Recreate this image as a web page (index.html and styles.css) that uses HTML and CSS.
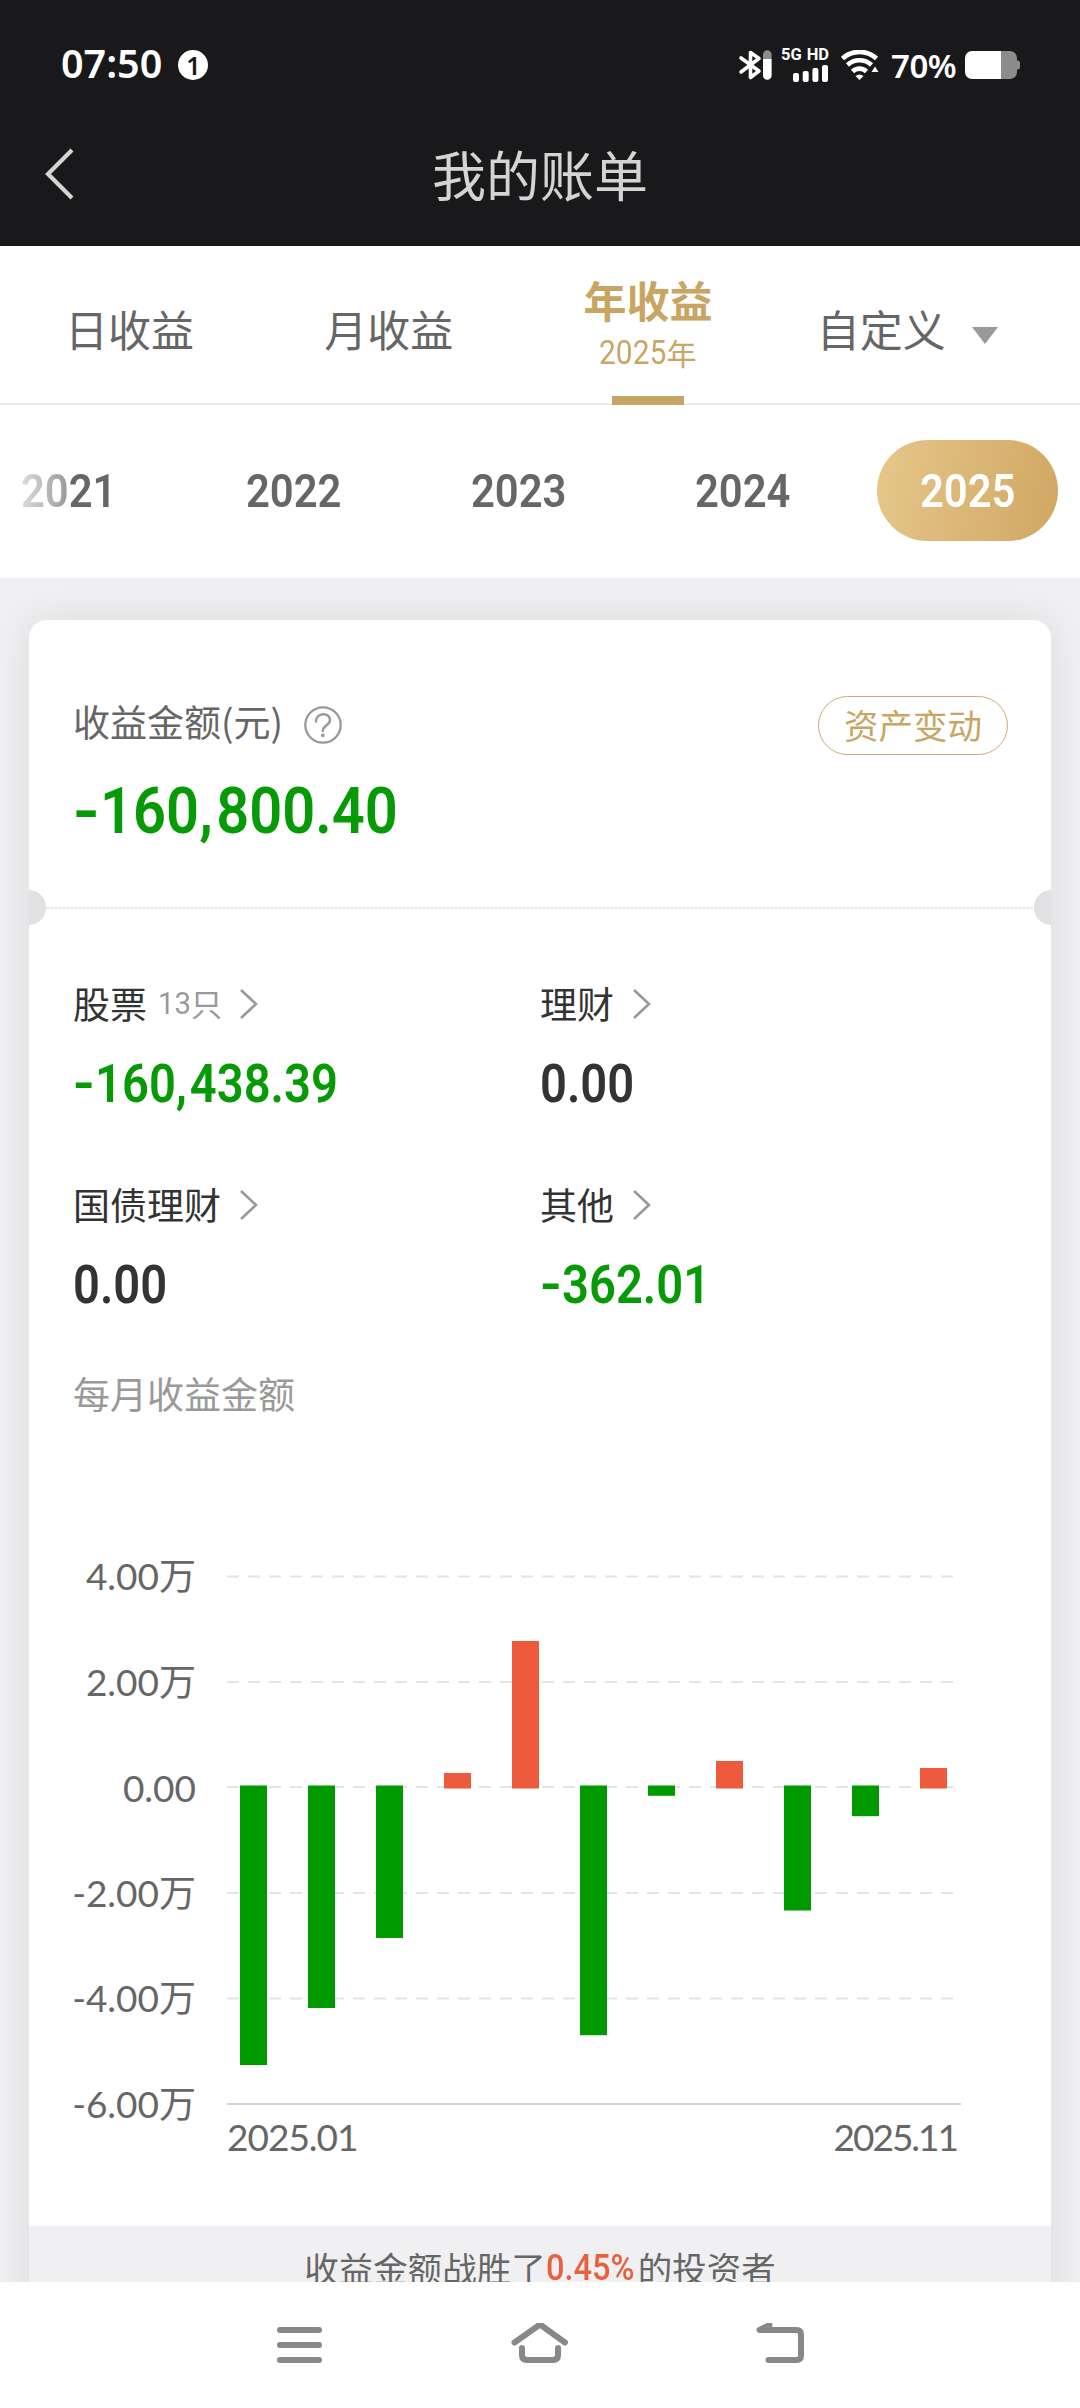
FILE: index.html
```html
<!DOCTYPE html>
<html lang="zh-CN">
<head>
<meta charset="utf-8">
<title>我的账单</title>
<link rel="stylesheet" href="styles.css">
</head>
<body>
<div class="screen">
  <header class="top">
    <div class="status">
      <div class="status-left">
        <span class="clock">07:50</span>
        <span class="notice">1</span>
      </div>
      <div class="status-right">
        <svg class="ic-bt" width="34" height="32" viewBox="0 0 34 32">
          <path d="M3 9 21 22 12.500 28.500V3.500l8.500 6L3 23" fill="none" stroke="#fff" stroke-width="3.6" stroke-linejoin="round" stroke-linecap="round"/>
          <path d="M25 10V5.500a4.300 4.300 0 0 1 8.600 0V10z" fill="#8c8c8c"/>
          <path d="M25 10h8.600v16.500a4.300 4.300 0 0 1-8.600 0z" fill="#fff"/>
        </svg>
        <div class="signal">
          <div class="net"><span>5G</span><span>HD</span></div>
          <svg width="36" height="17" viewBox="0 0 36 17" fill="#fff">
            <rect x="0" y="8" width="6" height="9" rx="2"/><rect x="9.700" y="6" width="6" height="11" rx="2"/>
            <rect x="19.400" y="3" width="6" height="14" rx="2"/><rect x="29" y="0" width="6" height="17" rx="2"/>
          </svg>
        </div>
        <svg class="ic-wifi" width="38" height="30" viewBox="0 0 38 30">
          <g fill="none" stroke="#fff" stroke-width="4.600">
            <path d="M1.500 8.500a25 25 0 0 1 34 0"/>
            <path d="M6.500 15a17.500 17.500 0 0 1 24 0"/>
            <path d="M11.500 21.500a10 10 0 0 1 14 0"/>
          </g>
          <path d="M14.500 26q4-3 8 0l-4 4z" fill="#fff"/>
          <path d="M30.500 22 34 16.500 37.500 22z" fill="#fff"/>
        </svg>
        <span class="pct">70%</span>
        <svg class="ic-batt" width="55" height="28" viewBox="0 0 55 28">
          <path d="M36 0h9a7 7 0 0 1 7 7v2.500h.5a2.500 2.500 0 0 1 2.500 2.500v4a2.500 2.500 0 0 1-2.500 2.500h-.5V21a7 7 0 0 1-7 7h-9z" fill="#8c8c8c"/>
          <path d="M36 0v28H7a7 7 0 0 1-7-7V7a7 7 0 0 1 7-7z" fill="#fff"/>
        </svg>
      </div>
    </div>
    <div class="titlebar">
      <svg class="back" width="30" height="52" viewBox="0 0 30 52"><path d="M27 2 3 26l24 24" fill="none" stroke="#d4d4d4" stroke-width="4.200"/></svg>
      <h1>我的账单</h1>
    </div>
  </header>

  <nav class="tabs">
    <div class="tab">日收益</div>
    <div class="tab">月收益</div>
    <div class="tab active"><b>年收益</b><small><span class="din">2025</span>年</small></div>
    <div class="tab">自定义<i class="caret"></i></div>
  </nav>

  <div class="years">
    <span class="year"><em class="faded">2021</em></span>
    <span class="year"><em>2022</em></span>
    <span class="year"><em>2023</em></span>
    <span class="year"><em>2024</em></span>
    <span class="year on"><em>2025</em></span>
  </div>

  <main class="body">
    <section class="card">
      <div class="summary">
        <div class="summary-row">
          <span class="label">收益金额(元)</span>
          <svg class="help" width="40" height="40" viewBox="0 0 40 40" fill="none" stroke="#999" stroke-width="2.300" stroke-linecap="round">
            <circle cx="20" cy="20" r="17.700"/>
            <path d="M13 16.500c0-9.500 14-9.500 14-1.500 0 5.500-7.200 5-7.200 11" stroke-width="2.500"/>
            <circle cx="19.800" cy="30.300" r="1.100" fill="#999" stroke-width="1.500"/>
          </svg>
          <span class="pill">资产变动</span>
        </div>
        <div class="amount big green"><i>-</i>160<u>,</u>800.40</div>
      </div>
      <div class="tear"></div>
      <div class="grid">
        <div class="cell">
          <div class="name">股票<small><span class="din">13</span>只</small><svg class="chev" width="20" height="32" viewBox="0 0 20 32"><path d="m2 2 15 14L2 30"/></svg></div>
          <div class="amount green"><i>-</i>160<u>,</u>438.39</div>
        </div>
        <div class="cell">
          <div class="name">理财<svg class="chev" width="20" height="32" viewBox="0 0 20 32"><path d="m2 2 15 14L2 30"/></svg></div>
          <div class="amount">0.00</div>
        </div>
        <div class="cell">
          <div class="name">国债理财<svg class="chev" width="20" height="32" viewBox="0 0 20 32"><path d="m2 2 15 14L2 30"/></svg></div>
          <div class="amount">0.00</div>
        </div>
        <div class="cell">
          <div class="name">其他<svg class="chev" width="20" height="32" viewBox="0 0 20 32"><path d="m2 2 15 14L2 30"/></svg></div>
          <div class="amount green"><i>-</i>362.01</div>
        </div>
      </div>
      <div class="chart-title">每月收益金额</div>
      <svg class="chart" width="1022" height="686" viewBox="29 1540 1022 686">
        <g class="gridline">
          <path d="M227 1576.500H953"/><path d="M227 1682H953"/><path d="M227 1787H953"/><path d="M227 1893H953"/><path d="M227 1998.500H953"/>
        </g>
        <path class="axis" d="M227 2104H961"/>
        <g class="down">
          <rect x="240" y="1785.500" width="27" height="279.500"/>
          <rect x="308" y="1785.500" width="27" height="222.500"/>
          <rect x="376" y="1785.500" width="27" height="152.500"/>
          <rect x="580" y="1785.500" width="27" height="249.700"/>
          <rect x="648" y="1785.500" width="27" height="10.300"/>
          <rect x="784" y="1785.500" width="27" height="125"/>
          <rect x="852" y="1785.500" width="27" height="30.700"/>
        </g>
        <g class="up">
          <rect x="444" y="1773" width="27" height="15.500"/>
          <rect x="512" y="1641" width="27" height="147.500"/>
          <rect x="716" y="1761" width="27" height="27.500"/>
          <rect x="920" y="1768" width="27" height="20.500"/>
        </g>
        <g class="ylab">
          <text x="196" y="1590">4.00万</text>
          <text x="196" y="1695.500">2.00万</text>
          <text x="196" y="1801.500">0.00</text>
          <text x="196" y="1906.500">-2.00万</text>
          <text x="196" y="2012">-4.00万</text>
          <text x="196" y="2118">-6.00万</text>
        </g>
        <g class="xlab">
          <text x="227" y="2151">2025.01</text>
          <text class="tight" x="957" y="2151" text-anchor="end">2025.11</text>
        </g>
      </svg>
      <div class="beat">收益金额战胜了<span class="beat-num">0.45%</span>的投资者</div>
    </section>
  </main>

  <footer class="sysnav">
    <svg width="50" height="44" viewBox="0 0 50 44"><path d="M6 7h39M6 22h39M6 37h39"/></svg>
    <svg width="60" height="44" viewBox="0 0 60 44"><path d="M5.500 19.500 31 1.500l25 18M13 25v7q0 5 5 5h26q5 0 5-5V25"/></svg>
    <svg width="52" height="44" viewBox="0 0 52 44"><path d="M15.500 2 5.500 7h37q4.500 0 4.500 4.500v21q0 4.500-4.500 4.500H14.500"/></svg>
  </footer>
</div>
</body>
</html>
```
FILE: styles.css
```css
* { box-sizing: border-box; margin: 0; padding: 0; }
body { background: #fff; font-family: "Noto Sans CJK SC", sans-serif; color: #333; }
em, i, u { font-style: normal; text-decoration: none; }
.screen { width: 1080px; height: 2408px; display: flex; flex-direction: column; overflow: hidden; }

.top { height: 246px; background: #19191b; color: #fff; flex: none; }
.status { height: 130px; padding: 0 60px 0 61px; display: flex; align-items: center; justify-content: space-between; }
.status-left, .status-right { display: flex; align-items: center; }
.clock { font: 600 39.500px/54px "Noto Sans", sans-serif; margin-top: -4px; }
.notice { width: 30px; height: 30px; margin-left: 16px; border-radius: 50%; background: #fff; color: #19191b; font: 600 25px/30px "Noto Sans", sans-serif; text-align: center; }
.ic-bt { margin-right: 9px; }
.signal { width: 48px; display: flex; flex-direction: column; align-items: flex-end; gap: 4px; }
.net { display: flex; justify-content: space-between; width: 48px; height: 13px; font: 700 16.500px/13px "Roboto", sans-serif; }
.signal svg { display: block; }
.ic-wifi { margin-left: 12px; }
.pct { font: 600 33px/40px "Noto Sans", sans-serif; margin: 2px 0 0 12px; width: 74px; letter-spacing: -.5px; }
.ic-batt { display: block; }
.titlebar { height: 94px; display: flex; align-items: center; padding: 0 75px 6px 45px; }
.titlebar h1 { flex: 1; font-size: 54px; line-height: 80px; font-weight: 400; color: #d4d4d4; text-align: center; }
.back { flex: none; }

.tabs { height: 159px; flex: none; display: grid; grid-template-columns: repeat(4, 259.200px); border-bottom: 2px solid #ececec; }
.tab { height: 159px; display: flex; align-items: center; justify-content: center; font-size: 43px; color: #666; padding-top: 4px; }
.tab.active { flex-direction: column; justify-content: flex-start; color: #c9a563; padding-top: 23px; }
.tab.active b { line-height: 60px; }
.tab.active small { font-size: 30px; line-height: 47px; display: flex; align-items: center; }
.tab.active::after { content: ""; width: 72px; height: 9px; margin-top: auto; background: #c9a563; }
.din { font-family: "Roboto", sans-serif; display: inline-block; }
.tab small .din { font-size: 34px; width: 67px; transform: scaleX(.88); transform-origin: 0 50%; }
.caret { margin: 15px 0 0 26px; border: 13px solid transparent; border-top: 17px solid #999; border-bottom: 0; }

.years { height: 173px; flex: none; padding: 0 22px 0 0; display: flex; justify-content: flex-end; gap: 43.600px; align-items: center; }
.year { flex: none; width: 181px; height: 101px; margin-top: -2px; border-radius: 51px; display: flex; align-items: center; justify-content: center; color: #666; font: 600 47px/101px "Roboto", sans-serif; }
.year em { display: block; transform: scaleX(.89); }
.year.on { color: #fff; background: linear-gradient(100deg, #e6c78b, #d0a762); }
.faded { background: linear-gradient(90deg, #ddd 0, #999 50%, #666 51%); background-clip: text; -webkit-background-clip: text; color: transparent; }

.body { height: 1704px; flex: none; background: #f0f0f2; padding: 42px 29px 0; overflow: hidden; }
.card { height: 1720px; background: #fff; border-radius: 18px 18px 0 0; box-shadow: 0 0 42px rgba(0, 0, 0, .09); }
.summary { height: 287px; padding: 74px 43px 0 44px; }
.summary-row { display: flex; align-items: center; height: 62px; }
.label { font-size: 37px; color: #666; margin-top: -8px; }
.help { margin-left: 20px; }
.pill { margin-left: auto; width: 190px; height: 59px; border: 1.500px solid #cbad72; border-radius: 30px; color: #c9a563; font-size: 34.500px; line-height: 54px; text-align: center; }
.amount { font: 600 53px/62px "Roboto", sans-serif; width: max-content; transform: scaleX(.89); transform-origin: 0 50%; color: #333; }
.amount i { display: inline-block; transform: scaleX(1.250); transform-origin: 0 50%; padding-right: .1em; }
.amount u { margin-right: .06em; }
.amount.big { font-size: 65px; line-height: 76px; margin-top: 17px; }
.amount.green { color: #079a07; }

.tear { height: 2px; margin: 0 17px; background: repeating-linear-gradient(90deg, #e9e9e9 0 3px, #fff 3px 4px); position: relative; }
.tear::before, .tear::after { content: ""; position: absolute; top: -17px; width: 17px; height: 35px; background: #e1e1e3; }
.tear::before { left: -17px; border-radius: 0 18px 18px 0; }
.tear::after { right: -17px; border-radius: 18px 0 0 18px; }

.grid { display: grid; grid-template-columns: 467px 468px; grid-auto-rows: 201px; padding: 68px 0 0 44px; }
.name { height: 56px; display: flex; align-items: center; font-size: 37px; line-height: 56px; padding-bottom: 5px; }
.name small { font-size: 31px; color: #999; margin-left: 11px; display: flex; align-items: center; }
.name small .din { font-size: 32px; width: 33px; transform: scaleX(.92); transform-origin: 0 50%; }
.chev { margin: 3px 0 0 18px; fill: none; stroke: #999; stroke-width: 2.600; }
.name small + .chev { margin-left: 17px; }
.cell .amount { margin-top: 20px; }

.chart-title { margin: -13px 0 0 44px; font-size: 37px; line-height: 54px; height: 174px; color: #999; }
.chart { display: block; }
.gridline { stroke: #e4e4e4; stroke-width: 2; stroke-dasharray: 12 9; }
.axis { stroke: #d4d4d4; stroke-width: 2; }
.down { fill: #009900; }
.up { fill: #ee5a3c; }
.ylab, .xlab { font: 400 37px "Lato", "Noto Sans CJK SC", sans-serif; fill: #666; }
.ylab { text-anchor: end; }
.xlab { letter-spacing: -1px; }
.xlab .tight { letter-spacing: -2px; }
.beat { height: 120px; background: #f0f0f2; display: flex; justify-content: center; padding-top: 15px; font-size: 34.500px; line-height: 52px; color: #666; }
.beat-num { font: 500 37px/54px "Roboto", sans-serif; color: #e9603f; width: 92px; transform: scaleX(.88); transform-origin: 0 50%; }

.sysnav { height: 126px; flex: none; background: #fff; display: flex; align-items: flex-start; justify-content: center; gap: 185px; padding-top: 41px; }
.sysnav svg { fill: none; stroke: #888; stroke-width: 6; stroke-linecap: round; stroke-linejoin: round; }
```
